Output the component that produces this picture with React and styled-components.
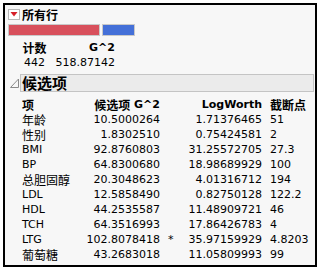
import React from 'react';
import styled, { createGlobalStyle, css } from 'styled-components';

const Global = createGlobalStyle`
  body {
    margin: 0;
    background: #ffffff;
    font-family: "DejaVu Sans", "Noto Sans CJK SC", sans-serif;
    font-size: 11px;
    color: #000;
  }
`;

const Frame = styled.div`
  margin: 3px 0 0 3px;
  width: 314px;
  height: 264px;
  box-sizing: border-box;
  border: 2px solid #000;
  background: #f7f7f7;
  overflow: hidden;
`;

const TitleRow = styled.div`
  margin-top: 3px;
  padding-left: 3px;
  height: 13px;
  display: flex;
  align-items: center;
  gap: 2px;
`;

const Title = styled.span`
  font-family: "Noto Sans CJK SC", sans-serif;
  font-size: 12px;
  font-weight: 700;
  line-height: 13px;
`;

const Bars = styled.div`
  margin-top: 3px;
  padding-left: 3px;
  display: flex;
  gap: 2px;
`;

const Bar = styled.div`
  height: 12px;
  box-sizing: border-box;
  border: 1px solid #c9c9c9;
  width: ${p => p.w}px;
  background: ${p => p.color};
`;

const Summary = styled.div`
  margin-top: 4px;
  padding-left: 17px;
  display: grid;
  grid-template-columns: 25px 68px;
  grid-auto-rows: 15px;
  line-height: 15px;
`;

const SumCell = styled.div`
  white-space: nowrap;
  height: 15px;
  text-align: ${p => (p.center ? 'center' : 'right')};
  ${p => p.head && css`font-weight: 700;`}
`;

const Section = styled.div`
  margin-top: 4px;
  padding-left: 5px;
  margin-right: 1px;
  display: flex;
  align-items: center;
  gap: 1px;
`;

const SectionBox = styled.div`
  flex: 1;
  height: 18px;
  box-sizing: border-box;
  border: 1px solid #c4c4c4;
  background: #ebebeb;
  padding-left: 1px;
  display: flex;
  align-items: center;
`;

const SectionTitle = styled.span`
  font-family: "Noto Sans CJK SC", sans-serif;
  font-size: 15px;
  font-weight: 700;
  line-height: 16px;
`;

const Table = styled.div`
  margin-top: 5px;
  padding-left: 17px;
  display: grid;
  grid-template-columns: 60px 78px 20px 82px auto;
  grid-auto-rows: 15px;
  line-height: 15px;
`;

const Cell = styled.div`
  white-space: nowrap;
  height: 15px;
  ${p => p.right && 'text-align: right;'}
  ${p => p.pad && 'padding-left: 8px;'}
  ${p => p.head && 'font-weight: 700;'}
`;

const Han = styled.span`
  display: inline-block;
  vertical-align: top;
  height: 15px;
  line-height: 15px;
  font-family: "Noto Sans CJK SC", sans-serif;
  font-size: 12px;
`;

const RedTriangle = () => (
  <svg width="12" height="11" viewBox="0 0 12 11">
    <rect x="0.5" y="0.5" width="11" height="10" fill="#fff" stroke="#b8b8b8" />
    <polygon points="2.5,3 9.5,3 6,7.5" fill="#d6202a" />
  </svg>
);

const OpenTriangle = () => (
  <svg width="9" height="10" viewBox="0 0 9 10">
    <polygon points="8.5,1 8.5,9.5 0.5,9.5" fill="none" stroke="#8a8a8a" />
  </svg>
);

const rows = [
  ['年龄', '10.5000264', '', '1.71376465', '51'],
  ['性别', '1.8302510', '', '0.75424581', '2'],
  ['BMI', '92.8760803', '', '31.25572705', '27.3'],
  ['BP', '64.8300680', '', '18.98689929', '100'],
  ['总胆固醇', '20.3048623', '', '4.01316712', '194'],
  ['LDL', '12.5858490', '', '0.82750128', '122.2'],
  ['HDL', '44.2535587', '', '11.48909721', '46'],
  ['TCH', '64.3516993', '', '17.86426783', '4'],
  ['LTG', '102.8078418', '*', '35.97159929', '4.8203'],
  ['葡萄糖', '43.2683018', '', '11.05809993', '99'],
];

const isHan = s => /[\u4e00-\u9fff]/.test(s);

const App = () => (
  <>
    <Global />
    <Frame>
      <TitleRow>
        <RedTriangle />
        <Title>所有行</Title>
      </TitleRow>
      <Bars>
        <Bar w={92} color="#d8505c" />
        <Bar w={33} color="#4470d8" />
      </Bars>
      <Summary>
        <SumCell head center><Han>计数</Han></SumCell>
        <SumCell head>G^2</SumCell>
        <SumCell center>442</SumCell>
        <SumCell>518.87142</SumCell>
      </Summary>
      <Section>
        <OpenTriangle />
        <SectionBox>
          <SectionTitle>候选项</SectionTitle>
        </SectionBox>
      </Section>
      <Table>
        <Cell head><Han>项</Han></Cell>
        <Cell head right><Han>候选项</Han> G^2</Cell>
        <Cell />
        <Cell head right>LogWorth</Cell>
        <Cell head pad><Han>截断点</Han></Cell>
        {rows.map((r, i) => (
          <React.Fragment key={i}>
            <Cell>{isHan(r[0]) ? <Han>{r[0]}</Han> : r[0]}</Cell>
            <Cell right>{r[1]}</Cell>
            <Cell pad>{r[2]}</Cell>
            <Cell right>{r[3]}</Cell>
            <Cell pad>{r[4]}</Cell>
          </React.Fragment>
        ))}
      </Table>
    </Frame>
  </>
);

export default App;
